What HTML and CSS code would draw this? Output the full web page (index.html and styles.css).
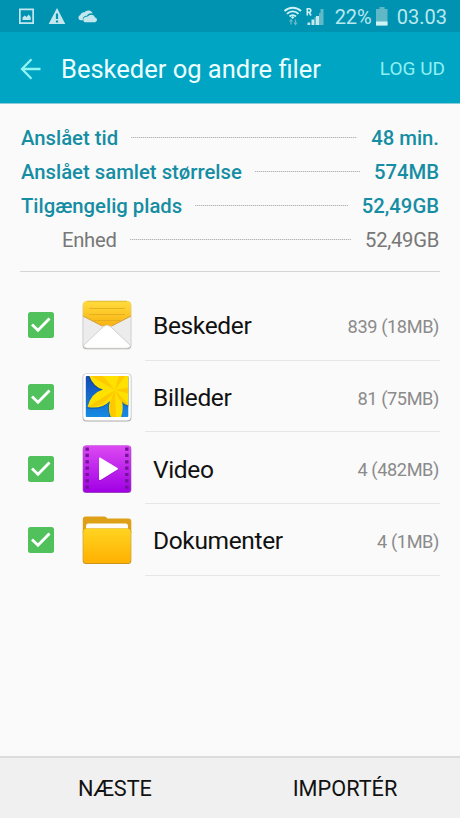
FILE: index.html
```html
<!DOCTYPE html>
<html lang="da">
<head>
<meta charset="utf-8">
<title>Beskeder og andre filer</title>
<link rel="stylesheet" href="styles.css">
</head>
<body>
<div class="screen">
  <div class="status">
    <svg class="status-left" width="100" height="32" viewBox="0 0 100 32" fill="#c4e7ee">
      <path fill-rule="evenodd" d="M19 8.500h15v15.500h-15zM20.700 10.200v12.100h11.600v-12.100z"/>
      <path d="M22.500 20v-2.500l2.200-2 1.800 1.500 2.200-2.500 2 2.500v3z"/>
      <path fill-rule="evenodd" d="M57 8l8.300 16h-16.600zM55.900 13.500v5.500h2.200v-5.500zM55.900 20.500v2h2.200v-2z"/>
      <path d="M80.500 20.200a2.700 2.700 0 0 1-.2-5.200a3.800 3.800 0 0 1 4-2.600a5 5 0 0 1 8.500 1.200c-3-.8-5 .5-5.800 2.200c-3.300 0-4.700 2.200-4 4.400z"/>
      <path d="M84.800 22.200a2.800 2.800 0 0 1 .3-5.200a4 4 0 0 1 2.700-.5a4.200 4.200 0 0 1 7.300 1a2.400 2.400 0 0 1 0 4.700z"/>
    </svg>
    <div class="status-right">
      <svg width="44" height="32" viewBox="281 0 44 32" fill="none" stroke="#d0f2f6">
        <path d="M284.500 11a12 12 0 0 1 16.500 0M287 13.800a8 8 0 0 1 11.500 0M289.600 16.500a4.400 4.400 0 0 1 6.300 0" stroke-width="1.900"/>
        <path d="M292.700 16l-1.700 1.200 1.700 1.700 1.700-1.700z" fill="#d0f2f6" stroke="none"/>
        <path d="M291 24.500v-4.500m-1.500 1.500l1.500-2 1.500 2M295.500 19.500v4.500m-1.500-1.500l1.500 2 1.500-2" stroke="#65bac8" stroke-width="1.200"/>
        <path d="M307.300 15.500v-6.700h1.800a1.700 1.700 0 0 1 0 3.400h-1.800m1.800 0l1.900 3.300" stroke-width="1.600"/>
        <path d="M307.500 22.500h2.700v2.500h-2.700zM311.500 19.500h3v5.500h-3zM316 16h3v9h-3z" fill="#c4e9ef" stroke="none"/>
        <path d="M320.500 9h3v16h-3zM314.500 17h1.500v8h-1.500zM319 13h1.500v12h-1.500z" fill="#61b9c8" stroke="none"/>
      </svg>
      <span class="percent">22%</span>
      <svg class="battery" width="12" height="32" viewBox="0 0 12 32"><path fill="#60b8c6" d="M3.500 7h5v2h3v16.500h-11.500v-16.500h3.500z"/><path fill="#d0f3f6" d="M0 21.500h11.500v4h-11.500z"/></svg>
      <span class="clock">03.03</span>
    </div>
  </div>
  <header class="bar">
    <svg class="back" width="22" height="22" viewBox="0 0 22 22" fill="none" stroke="#8ff4f4" stroke-width="2.300"><path d="M20.500 11h-18.500M11.500 1.200l-9.500 9.800 9.500 9.800"/></svg>
    <h1>Beskeder og andre filer</h1>
    <span class="logout">LOG UD</span>
  </header>
  <main>
    <section class="summary">
      <div class="stat"><span>Anslået tid</span><i></i><span>48 min.</span></div>
      <div class="stat"><span>Anslået samlet størrelse</span><i></i><span>574MB</span></div>
      <div class="stat"><span>Tilgængelig plads</span><i></i><span>52,49GB</span></div>
      <div class="stat sub"><span>Enhed</span><i></i><span>52,49GB</span></div>
    </section>
    <section class="list">
      <div class="item">
        <svg class="check" viewBox="0 0 26 26"><rect width="26" height="26" rx="2.500" fill="#50c15b"/><path d="M4 12.500l6 5.700 11.500-11.700" fill="none" stroke="#fff" stroke-width="2.900"/></svg>
        <svg class="icon" viewBox="0 0 50 50">
          <defs><linearGradient id="gold" x2="0" y2="1"><stop stop-color="#ffdc3c"/><stop offset="1" stop-color="#f9b211"/></linearGradient></defs>
          <rect x=".7" y="1.500" width="48.600" height="47.800" rx="4" fill="#aaa"/>
          <rect x="1.200" y="1.500" width="47.600" height="46.800" rx="3.600" fill="#ececec"/>
          <path d="M1 16.500v-11.500a4 4 0 0 1 4-4h40a4 4 0 0 1 4 4v11.500l-20 10h-8z" fill="url(#gold)"/>
          <path d="M5 1.200h40" stroke="#d8ad35" stroke-width=".8"/>
          <path d="M7 8.500h36M7 14.500h36M12 20.500h26" stroke="#dca51b" stroke-width=".7"/>
          <path d="M1.200 16l19 10M48.800 16l-19 10" stroke="#c49b47" stroke-width=".8"/>
          <path d="M1.500 45.500l20-19q3.500-3 7 0l20 19q-.7 2.800-3.700 2.800h-39.600q-3 0-3.700-2.800z" fill="#fff" stroke="#c9c6c0" stroke-width=".8"/>
        </svg>
        <div class="text"><span class="name">Beskeder</span><span class="size">839 (18MB)</span></div>
      </div>
      <div class="item">
        <svg class="check" viewBox="0 0 26 26"><rect width="26" height="26" rx="2.500" fill="#50c15b"/><path d="M4 12.500l6 5.700 11.500-11.700" fill="none" stroke="#fff" stroke-width="2.900"/></svg>
        <svg class="icon" viewBox="0 0 50 50">
          <defs><linearGradient id="sky" x2="0" y2="1"><stop stop-color="#1549b5"/><stop offset="1" stop-color="#168ce4"/></linearGradient><clipPath id="photo"><rect x="3.800" y="4" width="42.500" height="41" rx="1"/></clipPath></defs>
          <rect x=".6" y="1.600" width="48.800" height="47.800" rx="4" fill="#aaa"/>
          <rect x="1.200" y="1.800" width="47.600" height="46.600" rx="3.600" fill="#fff"/>
          <g clip-path="url(#photo)">
            <path fill="url(#sky)" d="M3 4h44v42h-44z"/>
            <path d="M7 3Q11 15 21 17.500Q9 21 5.500 35Q20 37.500 28 29Q25 39 30 47H38Q42 40 40 29Q43 33 48 34V3Z" fill="#053f86" opacity=".5" transform="translate(-.6 1.300)"/>
            <path d="M7 3Q11 15 21 17.500Q9 21 5.500 35Q20 37.500 28 29Q25 39 30 47H38Q42 40 40 29Q43 33 48 34V3Z" fill="#ffe100"/>
            <path d="M33 18L5.500 35Q22 36 33 18ZM33 18Q24 35 30 47H34ZM33 18L7 3L20 3ZM33 18L48 34Q41 33 37 27ZM33 18L37 3H44ZM33 18L48 15V22Z" fill="#ffb900" opacity=".6"/>
          </g>
        </svg>
        <div class="text"><span class="name">Billeder</span><span class="size">81 (75MB)</span></div>
      </div>
      <div class="item">
        <svg class="check" viewBox="0 0 26 26"><rect width="26" height="26" rx="2.500" fill="#50c15b"/><path d="M4 12.500l6 5.700 11.500-11.700" fill="none" stroke="#fff" stroke-width="2.900"/></svg>
        <svg class="icon" viewBox="0 0 50 50">
          <defs><linearGradient id="violet" x2="0" y2="1"><stop stop-color="#dc4af2"/><stop offset="1" stop-color="#a000e5"/></linearGradient></defs>
          <rect x=".7" y="1.500" width="48.600" height="47.500" rx="3.500" fill="#9b55ad"/>
          <rect x="1.200" y="1.600" width="47.600" height="46.600" rx="3.200" fill="url(#violet)"/>
          <path d="M5.200 3.500v43M44.800 3.500v43" stroke="#74139a" stroke-width="3.400" stroke-dasharray="3.200 3.150"/>
          <path d="M17 14.500q0-1.500 1.500-.8l17 10.300q1 .8 0 1.600l-17 10.300q-1.500.7-1.500-.9z" fill="#7608b1" opacity=".4" transform="translate(0 1)"/>
          <path d="M17 14.500q0-1.500 1.500-.8l17 10.300q1 .8 0 1.600l-17 10.300q-1.500.7-1.500-.9z" fill="#fff"/>
        </svg>
        <div class="text"><span class="name">Video</span><span class="size">4 (482MB)</span></div>
      </div>
      <div class="item">
        <svg class="check" viewBox="0 0 26 26"><rect width="26" height="26" rx="2.500" fill="#50c15b"/><path d="M4 12.500l6 5.700 11.500-11.700" fill="none" stroke="#fff" stroke-width="2.900"/></svg>
        <svg class="icon" viewBox="0 0 50 50">
          <defs><linearGradient id="folder" x2="0" y2="1"><stop stop-color="#ffd421"/><stop offset="1" stop-color="#ffb000"/></linearGradient></defs>
          <path d="M.8 18v-13.500q0-3 3-3h18.500q2 0 3 2h21q3 0 3 3v11.500z" fill="#dda017"/>
          <path d="M4 16v-5q0-2.500 2.500-2.500h37q2.500 0 2.500 2.500v5z" fill="#fffdf5"/>
          <rect x=".7" y="13.500" width="48.600" height="35.600" rx="3.500" fill="#bb8d28"/>
          <rect x="1.200" y="13.500" width="47.600" height="34.800" rx="3.500" fill="url(#folder)"/>
        </svg>
        <div class="text"><span class="name">Dokumenter</span><span class="size">4 (1MB)</span></div>
      </div>
    </section>
  </main>
  <footer><span>NÆSTE</span><span>IMPORTÉR</span></footer>
</div>
</body>
</html>
```
FILE: styles.css
```css
* { box-sizing: border-box; }
body { margin: 0; font-family: Roboto, "Liberation Sans", sans-serif; }
.screen { width: 460px; height: 818px; display: flex; flex-direction: column; background: #fafafa; overflow: hidden; }
svg { display: block; flex: none; }
span, h1 { white-space: nowrap; }
.status { height: 32px; flex: none; display: flex; justify-content: space-between; background: #0093b1; }
.status-right { display: flex; padding-right: 13px; color: #b9e8ef; font-size: 20px; line-height: 35px; }
.percent { margin-left: 10px; }
.battery { margin-left: 4px; }
.clock { margin-left: 9px; }
.bar { height: 72px; flex: none; display: flex; align-items: center; padding: 2px 15px 0 20px; background: #00a5c4; border-bottom: 1px solid #8ccbd8; }
h1 { margin: 0 auto 0 19px; font-size: 25.500px; font-weight: 400; color: #ecffff; }
.logout { font-size: 19px; color: #8ff0f2; }
main { flex: 1; }
.summary { margin: 0 20px; padding-top: 18px; height: 168px; border-bottom: 1px solid #d5d5d5; }
.stat { height: 33.900px; display: flex; align-items: center; padding-left: 1px; color: #158da3; font-size: 20.300px; font-weight: 500; line-height: 33px; }
.stat span:last-child { margin-right: 1px; }
.stat i { flex: 1; height: 1px; margin: 0 14px 2px 13px; background: repeating-linear-gradient(90deg, #b6b6b6 0 1px, #e2e2e2 1px 2px); }
.stat.sub { padding-left: 42px; color: #777; font-size: 20.200px; font-weight: 400; }
.sub span { letter-spacing: -.25px; }
.list { padding: 17px 20px 0 28px; }
.item { height: 71.700px; display: flex; align-items: center; }
.check { width: 26px; height: 26px; margin-top: 1px; }
.icon { width: 50px; height: 50px; margin: 1px 0 0 28px; }
.text { flex: 1; height: 100%; margin-left: 13px; padding: 4px 1px 0 8px; display: flex; align-items: center; justify-content: space-between; border-bottom: 1px solid #e6e6e6; }
.name { margin-top: -1px; font-size: 24.500px; letter-spacing: -.35px; color: #111; }
.size { font-size: 18.200px; letter-spacing: -.4px; color: #8b8b8b; }
footer { height: 62px; flex: none; display: grid; grid-template-columns: 1fr 1fr; align-items: center; justify-items: center; border-top: 2px solid #dcdcdc; background: #f0f0f0; font-size: 21.700px; color: #111; }
```
